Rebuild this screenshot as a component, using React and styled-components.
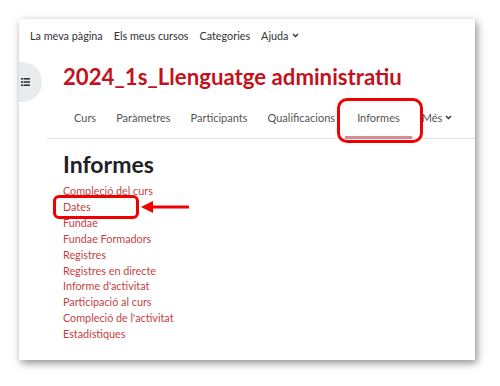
import React from "react";
import styled, { createGlobalStyle } from "styled-components";

const GlobalStyle = createGlobalStyle`
  html, body {
    margin: 0;
    padding: 0;
    background: #ffffff;
  }
  body {
    font-family: Lato, "Open Sans", sans-serif;
  }
`;

const Page = styled.div`
  width: 500px;
  height: 386px;
  padding: 19px 0 0 19px;
  box-sizing: border-box;
  overflow: hidden;
`;

const Card = styled.div`
  position: relative;
  width: 456px;
  height: 341px;
  background: #fff;
  box-shadow: 2px 3px 8px rgba(0, 0, 0, 0.45);
`;

const TopNav = styled.nav`
  display: flex;
  align-items: center;
  gap: 11px;
  height: 32px;
  padding-left: 11px;
`;

const NavItem = styled.span`
  display: flex;
  align-items: center;
  gap: 4px;
  font-size: 10.8px;
  color: #333;
`;

const DrawerTab = styled.div`
  position: absolute;
  left: 0;
  top: 43px;
  width: 23px;
  height: 40px;
  border-radius: 0 20px 20px 0;
  background: #e9ecef;
  display: flex;
  align-items: center;
  padding-left: 2px;
  box-sizing: border-box;
`;

const Title = styled.h1`
  margin: 11px 0 0 44px;
  font-size: 22.2px;
  line-height: 30px;
  font-weight: 700;
  color: #c2121b;
`;

const Tabs = styled.div`
  display: flex;
  margin: 4px 0 0 28px;
  height: 43px;
  border-bottom: 1px solid #e3e3e3;
  padding-left: 17px;
  box-sizing: border-box;
`;

const Tab = styled.div`
  position: relative;
  display: flex;
  align-items: center;
  gap: 3px;
  padding: 0 ${(p) => p.$pad || 10}px;
  font-size: 11px;
  color: #555;

  &::after {
    content: "";
    display: ${(p) => (p.$active ? "block" : "none")};
    position: absolute;
    left: 0;
    right: 0;
    bottom: -1px;
    height: 3px;
    background: #d98a8c;
  }
`;

const Section = styled.section`
  padding: 10px 0 0 44px;
`;

const Heading = styled.h2`
  margin: 0;
  font-size: 23px;
  line-height: 30px;
  font-weight: 700;
  color: #1d2125;
`;

const LinkList = styled.ul`
  list-style: none;
  margin: 4px 0 0;
  padding: 0;
`;

const LinkItem = styled.li`
  font-size: 10.8px;
  line-height: 15.9px;
  color: #c53f3f;
`;

const Callout = styled.div`
  position: absolute;
  border: 3px solid #f00000;
  border-radius: ${(p) => p.$radius}px;
  box-sizing: border-box;
`;

const Arrow = styled.svg`
  position: absolute;
  left: 121px;
  top: 181px;
`;

const Chevron = () => (
  <svg width="7" height="5" viewBox="0 0 7 5">
    <path d="M1 1l2.5 2.5L6 1" fill="none" stroke="#333" strokeWidth="1.4" />
  </svg>
);

const ListIcon = () => (
  <svg width="9" height="8" viewBox="0 0 9 8">
    <g fill="#333">
      <rect x="0" y="0" width="2" height="1.6" />
      <rect x="2.6" y="0" width="6.4" height="1.6" />
      <rect x="0" y="3.2" width="2" height="1.6" />
      <rect x="2.6" y="3.2" width="6.4" height="1.6" />
      <rect x="0" y="6.4" width="2" height="1.6" />
      <rect x="2.6" y="6.4" width="6.4" height="1.6" />
    </g>
  </svg>
);

const links = [
  "Compleció del curs",
  "Dates",
  "Fundae",
  "Fundae Formadors",
  "Registres",
  "Registres en directe",
  "Informe d'activitat",
  "Participació al curs",
  "Compleció de l'activitat",
  "Estadístiques",
];

const App = () => {
  return (
    <Page>
      <GlobalStyle />
      <Card>
        <TopNav>
          <NavItem>La meva pàgina</NavItem>
          <NavItem>Els meus cursos</NavItem>
          <NavItem>Categories</NavItem>
          <NavItem>
            Ajuda <Chevron />
          </NavItem>
        </TopNav>
        <DrawerTab>
          <ListIcon />
        </DrawerTab>
        <Title>2024_1s_Llenguatge administratiu</Title>
        <Tabs>
          <Tab>Curs</Tab>
          <Tab>Paràmetres</Tab>
          <Tab>Participants</Tab>
          <Tab>Qualificacions</Tab>
          <Tab $active $pad={12}>Informes</Tab>
          <Tab>
            Més <Chevron />
          </Tab>
        </Tabs>
        <Section>
          <Heading>Informes</Heading>
          <LinkList>
            {links.map((l) => (
              <LinkItem key={l}>{l}</LinkItem>
            ))}
          </LinkList>
        </Section>
        <Callout $radius={10} style={{ left: 318, top: 79, width: 86, height: 45 }} />
        <Callout $radius={6} style={{ left: 34, top: 176, width: 86, height: 24 }} />
        <Arrow width="50" height="14" viewBox="0 0 50 14">
          <path d="M1 7l12-6v12z" fill="#f00000" />
          <rect x="10" y="5.5" width="39" height="3" fill="#f00000" />
        </Arrow>
      </Card>
    </Page>
  );
};

export default App;
